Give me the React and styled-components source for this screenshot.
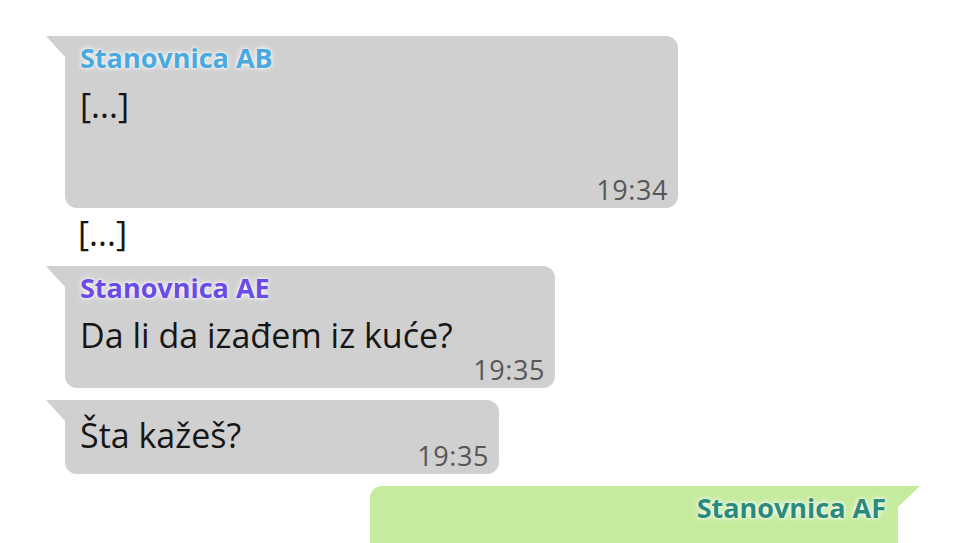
import React from "react";
import styled, { createGlobalStyle, css } from "styled-components";

const Global = createGlobalStyle`
  html, body { margin: 0; padding: 0; background: #ffffff; }
  body { font-family: "Open Sans", "Noto Sans", sans-serif; color: #151515; }
`;

const Page = styled.div`
  width: 965px;
  height: 543px;
  overflow: hidden;
  box-sizing: border-box;
  padding-top: 36px;
  display: flex;
  flex-direction: column;
`;

const Row = styled.div`
  display: flex;
  justify-content: ${(p) => (p.$out ? "flex-end" : "flex-start")};
  padding: ${(p) => (p.$out ? "0 67px 0 0" : "0 0 0 65px")};
  margin-bottom: ${(p) => p.$gap ?? 12}px;
`;

const Bubble = styled.div`
  position: relative;
  box-sizing: border-box;
  width: ${(p) => p.$width}px;
  min-height: ${(p) => p.$minHeight || 0}px;
  background: ${(p) => (p.$out ? "#c6eb9e" : "#d0d0d0")};
  padding: ${(p) => (p.$named ? "4px" : "10px")} ${(p) => (p.$out ? "12px" : "10px")} 0
    ${(p) => (p.$out ? "12px" : "15px")};
  border-radius: ${(p) => (p.$out ? "12px 0 12px 12px" : "0 12px 12px 12px")};

  &::before {
    content: "";
    position: absolute;
    top: 0;
    height: 21px;
    background: inherit;
    ${(p) =>
      p.$out
        ? css`
            right: -22px;
            width: 22px;
            clip-path: polygon(0 0, 100% 0, 0 100%);
          `
        : css`
            left: -19px;
            width: 19px;
            clip-path: polygon(0 0, 100% 0, 100% 100%);
          `}
  }
`;

const Name = styled.div`
  font-weight: 700;
  font-size: 27px;
  line-height: 36px;
  margin-bottom: 4px;
  color: ${(p) => p.$color};
  text-align: ${(p) => (p.$out ? "right" : "left")};
  text-shadow: 0 0 3px #ffffff, 0 0 6px rgba(255, 255, 255, 0.9);
`;

const Body = styled.div`
  display: flex;
  flex-direction: ${(p) => (p.$inline ? "row" : "column")};
  align-items: flex-end;
`;

const Text = styled.div`
  align-self: flex-start;
  font-size: 34px;
  line-height: 50px;
  margin-bottom: 14px;
  white-space: pre-line;
  color: #161616;
`;

const Time = styled.div`
  margin-left: auto;
  margin-top: ${(p) => (p.$inline ? "0" : "-18px")};
  margin-bottom: 4px;
  font-size: 27px;
  line-height: 28px;
  letter-spacing: 0.6px;
  color: #575757;
`;

const Interlude = styled.div`
  margin: 0 0 8px 78px;
  font-size: 34px;
  line-height: 50px;
  color: #161616;
`;

const messages = [
  { name: "Stanovnica AB", color: "#4aaae0", text: "[...]\n\u00a0", time: "19:34", width: 613 },
  { interlude: "[...]" },
  { name: "Stanovnica AE", color: "#6b4be6", text: "Da li da izađem iz kuće?", time: "19:35", width: 490 },
  { text: "Šta kažeš?", time: "19:35", width: 434, inline: true },
  { name: "Stanovnica AF", color: "#2b8b7b", width: 528, out: true, minHeight: 120 },
];

export default function App() {
  return (
    <>
      <Global />
      <Page>
        {messages.map((m, i) => {
          if (m.interlude) return <Interlude key={i}>{m.interlude}</Interlude>;
          const gap = messages[i + 1]?.interlude ? 0 : 12;
          return (
            <Row key={i} $out={m.out} $gap={gap}>
              <Bubble $width={m.width} $out={m.out} $named={!!m.name} $minHeight={m.minHeight}>
                {m.name && (
                  <Name $color={m.color} $out={m.out}>
                    {m.name}
                  </Name>
                )}
                {m.text && (
                  <Body $inline={m.inline}>
                    <Text>{m.text}</Text>
                    <Time $inline={m.inline}>{m.time}</Time>
                  </Body>
                )}
              </Bubble>
            </Row>
          );
        })}
      </Page>
    </>
  );
}
